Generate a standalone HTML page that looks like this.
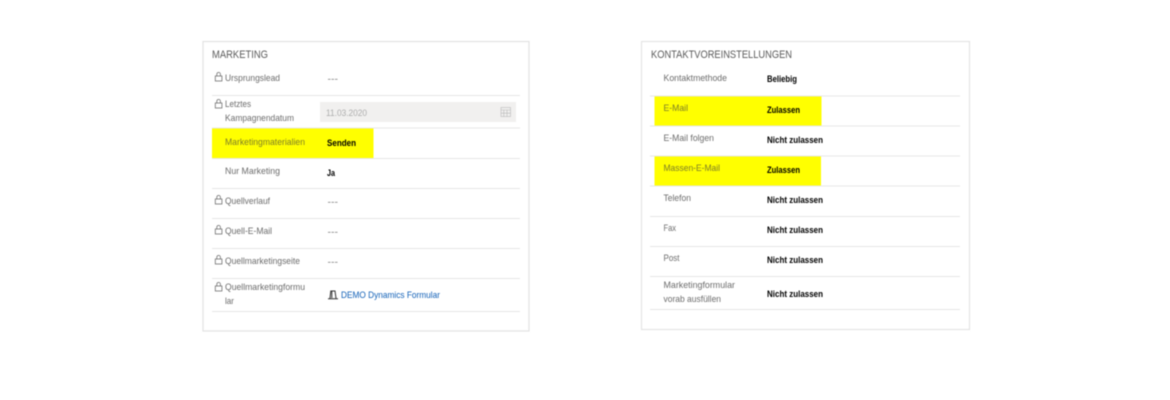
<!DOCTYPE html>
<html><head><meta charset="utf-8"><style>
html,body{margin:0;padding:0;background:#fff;width:1170px;height:400px;overflow:hidden}
svg{display:block;filter:blur(.4px)}
text{font-family:"Liberation Sans",sans-serif;font-size:9.5px;fill:#6c6c6c}
.h{font-size:11px;fill:#5a5a5a}
.b{font-weight:bold;font-size:9.3px;fill:#000}
.d{fill:#777;font-size:9px}
.l{stroke:#e6e6e6;stroke-width:1}
.k{fill:none;stroke:#707070;stroke-width:.8}
</style></head><body>
<svg width="1170" height="400" viewBox="0 0 1170 400" xmlns="http://www.w3.org/2000/svg">
<defs>
<g id="lock"><rect class="k" x="215.300" y="0" width="6.600" height="5"/><path class="k" d="M216.800 0V-1.800a1.800 1.800 0 0 1 3.600 0V0"/></g>
</defs>
<rect x="203" y="41.500" width="326" height="289.500" fill="#fff" stroke="#e2e2e2" stroke-width="1.200"/>
<rect x="641.500" y="41.500" width="328" height="288" fill="#fff" stroke="#e4e4e4" stroke-width="1.200"/>

<rect x="212" y="128.500" width="161.500" height="29.500" fill="#ff0"/>
<rect x="654.500" y="96.500" width="167" height="29.500" fill="#ff0"/>
<rect x="654.500" y="156.500" width="166.500" height="29.500" fill="#ff0"/>

<path class="l" d="M212 95.500H520M212 128H520M212 158.500H520M212 188.500H520M212 218.500H520M212 248.500H520M212 278.500H520M212 311.500H520"/>
<path class="l" d="M650 96H960M650 126H960M650 156H960M650 186H960M650 216.500H960M650 246.500H960M650 276.500H960M650 309.500H960"/>

<text class="h" x="212" y="58" textLength="56" lengthAdjust="spacingAndGlyphs">MARKETING</text>
<use href="#lock" y="76"/><text x="225" y="81" textLength="55" lengthAdjust="spacingAndGlyphs">Ursprungslead</text>
<text class="d" x="327.500" y="82" textLength="10.500" lengthAdjust="spacingAndGlyphs">---</text>

<use href="#lock" y="103"/><text x="225" y="107" textLength="26" lengthAdjust="spacingAndGlyphs">Letztes</text>
<text x="225" y="121" textLength="69" lengthAdjust="spacingAndGlyphs">Kampagnendatum</text>
<rect x="320" y="102" width="196" height="20" fill="#f1f0ef"/>
<text x="326" y="116" textLength="41" lengthAdjust="spacingAndGlyphs" style="fill:#adadad">11.03.2020</text>
<g fill="none" stroke="#b8b8b8" stroke-width=".6"><rect x="501" y="107.500" width="9.500" height="9"/><path d="M501 110H510.500M503.800 110V116.500M507 110V116.500M501 113.200H510.500"/></g>

<text x="225" y="145" textLength="80" lengthAdjust="spacingAndGlyphs" style="fill:#7d7d28">Marketingmaterialien</text>
<text class="b" x="327" y="146" textLength="29" lengthAdjust="spacingAndGlyphs">Senden</text>
<text x="225" y="174" textLength="55" lengthAdjust="spacingAndGlyphs">Nur Marketing</text>
<text class="b" x="327" y="176" textLength="8" lengthAdjust="spacingAndGlyphs">Ja</text>

<use href="#lock" y="199"/><text x="225" y="204" textLength="45" lengthAdjust="spacingAndGlyphs">Quellverlauf</text>
<text class="d" x="327.500" y="205" textLength="10.500" lengthAdjust="spacingAndGlyphs">---</text>
<use href="#lock" y="229"/><text x="225" y="234" textLength="47" lengthAdjust="spacingAndGlyphs">Quell-E-Mail</text>
<text class="d" x="327.500" y="235" textLength="10.500" lengthAdjust="spacingAndGlyphs">---</text>
<use href="#lock" y="259"/><text x="225" y="264" textLength="75" lengthAdjust="spacingAndGlyphs">Quellmarketingseite</text>
<text class="d" x="327.500" y="265" textLength="10.500" lengthAdjust="spacingAndGlyphs">---</text>
<use href="#lock" y="286"/><text x="225" y="290" textLength="80" lengthAdjust="spacingAndGlyphs">Quellmarketingformu</text>
<text x="225" y="304" textLength="9" lengthAdjust="spacingAndGlyphs">lar</text>
<path d="M330 298.300L330.800 291H335L336 298.300M328 298.800H338M331.800 291.300V298" fill="none" stroke="#333" stroke-width="1"/>
<text x="341" y="298" textLength="99" lengthAdjust="spacingAndGlyphs" style="fill:#1160b7">DEMO Dynamics Formular</text>

<text class="h" x="651" y="58" textLength="141" lengthAdjust="spacingAndGlyphs">KONTAKTVOREINSTELLUNGEN</text>
<text x="663.500" y="81" textLength="63.500" lengthAdjust="spacingAndGlyphs">Kontaktmethode</text>
<text class="b" x="767" y="82" textLength="30" lengthAdjust="spacingAndGlyphs">Beliebig</text>
<text x="663.500" y="111" textLength="24.500" lengthAdjust="spacingAndGlyphs" style="fill:#7d7d28">E-Mail</text>
<text class="b" x="767" y="113" textLength="33" lengthAdjust="spacingAndGlyphs">Zulassen</text>
<text x="663.500" y="141" textLength="50.500" lengthAdjust="spacingAndGlyphs">E-Mail folgen</text>
<text class="b" x="767" y="143" textLength="56" lengthAdjust="spacingAndGlyphs">Nicht zulassen</text>
<text x="663.500" y="171" textLength="56.500" lengthAdjust="spacingAndGlyphs" style="fill:#7d7d28">Massen-E-Mail</text>
<text class="b" x="767" y="173" textLength="33" lengthAdjust="spacingAndGlyphs">Zulassen</text>
<text x="663.500" y="201" textLength="27.500" lengthAdjust="spacingAndGlyphs">Telefon</text>
<text class="b" x="767" y="203" textLength="56" lengthAdjust="spacingAndGlyphs">Nicht zulassen</text>
<text x="663.500" y="231" textLength="12.500" lengthAdjust="spacingAndGlyphs">Fax</text>
<text class="b" x="767" y="233" textLength="56" lengthAdjust="spacingAndGlyphs">Nicht zulassen</text>
<text x="663.500" y="261" textLength="16" lengthAdjust="spacingAndGlyphs">Post</text>
<text class="b" x="767" y="263" textLength="56" lengthAdjust="spacingAndGlyphs">Nicht zulassen</text>
<text x="663.500" y="288" textLength="71.500" lengthAdjust="spacingAndGlyphs">Marketingformular</text>
<text x="663.500" y="302" textLength="57.500" lengthAdjust="spacingAndGlyphs">vorab ausfüllen</text>
<text class="b" x="767" y="297" textLength="56" lengthAdjust="spacingAndGlyphs">Nicht zulassen</text>
</svg>
</body></html>
